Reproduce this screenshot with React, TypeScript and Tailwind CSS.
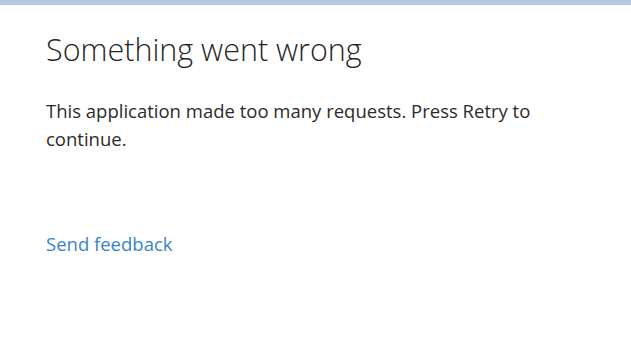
export default function App() {
  return (
    <div className="h-[353px] w-[631px] bg-white font-['Open_Sans',sans-serif] text-[#2b2b2b]">
      {/* top accent bar */}
      <div className="h-[5px] bg-[#b4c7e4]" />
      <div className="w-[566px] pl-[46px] pt-[26px]">
        <h1 className="text-[30.5px] font-light leading-[36px] text-[#262626]">Something went wrong</h1>
        <p className="mt-[30px] text-[18.5px] leading-[28px]">
          This application made too many requests. Press Retry to continue.
        </p>
        <a href="#" className="mt-[79px] block text-[18.5px] leading-[24px] text-[#3a84c9]">
          Send feedback
        </a>
      </div>
    </div>
  );
}
